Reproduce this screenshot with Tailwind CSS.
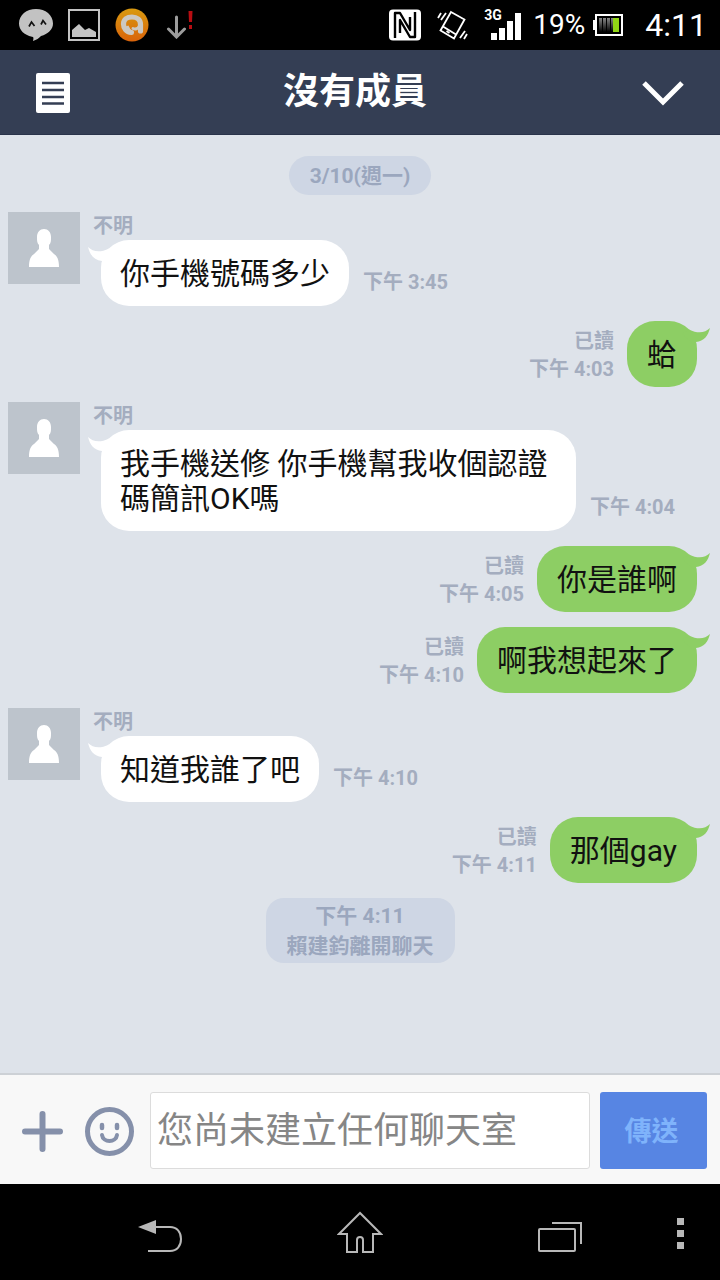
<!DOCTYPE html>
<html lang="zh-Hant">
<head>
<meta charset="utf-8">
<meta name="viewport" content="width=device-width, initial-scale=1">
<title>沒有成員</title>
<script src="https://cdn.jsdelivr.net/npm/@tailwindcss/browser@4"></script>
</head>
<body class="flex min-h-screen flex-col bg-[#dee3ea] font-[Roboto,'Noto_Sans_CJK_TC',sans-serif]">

<!-- Status bar -->
<div class="flex h-[50px] items-center justify-between bg-black pr-[13px] pl-[19px] text-white">
  <div class="flex items-center gap-[15px]">
    <svg class="h-8 w-[34px]" viewBox="0 0 34 32"><path d="M17 0C7.500 0 0 6 0 14.500c0 6.500 5 11.500 13 13.200 1.500.3 1.800 1 1 4.300 3.500-1 6-3 8-5C29 25 34 20.500 34 14.500 34 6 26.500 0 17 0Z" fill="#c2c2c2"/><path d="M10 17.500 12.500 13l3 4M22 15.500l2-4 3 4" fill="none" stroke="#111" stroke-width="1.700"/></svg>
    <svg class="size-8" viewBox="0 0 32 32"><rect x="1" y="1" width="30" height="30" fill="none" stroke="#c4c4c4" stroke-width="2"/><path d="M4 28v-7l7-6 6 6 4-2 7 4v5Z" fill="#c4c4c4"/></svg>
    <svg class="size-[34px]" viewBox="0 0 34 34"><defs><linearGradient id="orb" x1="0" y1="0" x2="0" y2="1"><stop stop-color="#d99a10"/><stop offset="1" stop-color="#d9630a"/></linearGradient></defs><circle cx="17" cy="17" r="16.500" fill="url(#orb)"/><path d="M16.500 24.500C11 24 8.500 20 8.500 16 8.500 11.500 12 9 17 9s8.500 3 8.500 7.500V23" fill="none" stroke="#ccc8c2" stroke-width="5.200" stroke-linecap="round"/><path d="M12 18c1 3 2.500 5 5.500 7" fill="none" stroke="#ccc8c2" stroke-width="3"/><path d="M18 20.500c2 1 5 .5 6-2" fill="none" stroke="#ccc8c2" stroke-width="3" stroke-linecap="round"/></svg>
    <svg class="h-7 w-[29px]" viewBox="0 0 29 28"><path d="M12.500 6v19M4.500 18l8 8 8-8" fill="none" stroke="#9c9c9c" stroke-width="3" stroke-linecap="round"/><path d="M24.500 0h4l-.5 11h-3zM25 14h3v4h-3z" fill="#b80d12"/></svg>
  </div>
  <div class="flex items-center">
    <svg class="h-8 w-8" viewBox="0 0 32 32"><rect width="32" height="31" y=".5" rx="4" fill="#fff"/><path d="M6 29V4h5l10 17V8M26 3v25h-5L11 11v13" fill="none" stroke="#000" stroke-width="2.400" stroke-linejoin="round"/></svg>
    <svg class="ml-4 h-8 w-[31px]" viewBox="0 0 31 32" fill="none" stroke="#fff" stroke-width="1.800"><path d="M14 3 27.500 10.500 17 29.500 3.500 21.500ZM6 17.500 19 25.500M9.500 22l3 2M1 9l3-5M4 11l5-7M23 29l5-7M27 30l3-5"/></svg>
    <div class="ml-4 flex h-8 w-[38px] items-start">
      <span class="w-[19px] text-sm leading-3 font-bold">3G</span>
      <svg class="-ml-3 h-8 w-[30px] shrink-0" viewBox="0 0 30 32" fill="#fff"><path d="M0 24h6v7H0zM8 19h6v12H8zM16 12h6v19h-6zM24 4h6v27h-6z"/></svg>
    </div>
    <span class="ml-[11px] text-[28px] leading-8">19%</span>
    <svg class="ml-2 h-6 w-[31px]" viewBox="0 0 31 24"><defs><linearGradient id="cell" x1="0" y1="0" x2="0" y2="1"><stop stop-color="#888"/><stop offset="1" stop-color="#000"/></linearGradient></defs><rect x="3" y="2" width="26" height="20" fill="none" stroke="#fff" stroke-width="2"/><path d="M0 7h2v10H0z" fill="#fff"/><path d="M6 5h3v14H6zM10 5h3v14h-3zM14 5h3v14h-3zM18 5h2v14h-2z" fill="url(#cell)"/><path d="M20 5h6v14h-6z" fill="#91d515"/></svg>
    <span class="ml-[21px] text-[32px] leading-8">4:11</span>
  </div>
</div>

<!-- Chat header -->
<header class="flex h-[85px] items-center justify-between border-b border-[#29334a] bg-[#343e54] px-9 pt-0.5 text-white">
  <button type="button" aria-label="記事本" class="w-12"><svg class="h-10 w-[34px]" viewBox="0 0 34 40"><rect width="34" height="40" rx="2" fill="#fff"/><path d="M6 10h22M6 17h22M6 24h22M6 30.500h22" stroke="#343e54" stroke-width="2.400"/></svg></button>
  <h1 class="pb-0.5 text-4xl font-bold">沒有成員</h1>
  <button type="button" aria-label="選單" class="flex w-[58px] justify-end"><svg class="h-7 w-[42px]" viewBox="0 0 42 28"><path d="M2 4 21 23 40 4" fill="none" stroke="#fff" stroke-width="5"/></svg></button>
</header>

<!-- Conversation -->
<main class="flex flex-1 flex-col gap-[15px] pt-[21px] pb-4 text-[30px] leading-[35px] text-[#111]">
  <p class="mb-0.5 self-center rounded-full bg-[#ced6e4] px-[21px] pt-[5px] pb-[3px] text-[21px] leading-[31px] font-bold text-[#9ba7be]">3/10(週一)</p>

  <article class="flex items-end pl-2">
    <svg class="size-[72px] self-start bg-[#bdc4cc]" viewBox="0 0 72 72"><path d="M21 55c0-8 2-11 5-13l5-5v-4c-2-2-2-4-2-8 0-5 3-8 7-8s7 3 7 8c0 4 0 6-2 8v4l5 5c3 2 5 5 5 13Z" fill="#fff"/></svg>
    <div class="ml-[13px]">
      <h2 class="text-xl leading-7 font-bold text-[#a4adbf]">不明</h2>
      <div class="relative ml-2 max-w-[475px] rounded-[28px] bg-white px-[19px] pt-4 pb-[15px]">
        <svg class="absolute top-[5px] -left-[13px] h-5 w-7" viewBox="0 0 28 20"><path d="M0 2C5 7 12 8 21 3.500L28 8 14 20V16C6 15 2 10 0 2Z" fill="#fff"/></svg>
        <p class="relative">你手機號碼多少</p>
      </div>
    </div>
    <time class="mb-[10px] ml-[14px] text-xl leading-7 font-bold whitespace-nowrap text-[#a4adbf]">下午 3:45</time>
  </article>

  <article class="flex items-center justify-end gap-[13px] pr-[23px]">
    <div class="pt-0.5 text-right text-xl leading-7 font-bold text-[#a4adbf]"><p>已讀</p><time>下午 4:03</time></div>
    <div class="relative rounded-[28px] bg-[#8dce64] px-5 pt-4 pb-[15px]">
      <svg class="absolute top-[5px] -right-[13px] h-5 w-7" viewBox="0 0 28 20"><path d="M28 2C23 7 16 8 7 3.500L0 8 14 20V16C22 15 26 10 28 2Z" fill="#8dce64"/></svg>
      <p class="relative">蛤</p>
    </div>
  </article>

  <article class="flex items-end pl-2">
    <svg class="size-[72px] self-start bg-[#bdc4cc]" viewBox="0 0 72 72"><path d="M21 55c0-8 2-11 5-13l5-5v-4c-2-2-2-4-2-8 0-5 3-8 7-8s7 3 7 8c0 4 0 6-2 8v4l5 5c3 2 5 5 5 13Z" fill="#fff"/></svg>
    <div class="ml-[13px]">
      <h2 class="text-xl leading-7 font-bold text-[#a4adbf]">不明</h2>
      <div class="relative ml-2 max-w-[475px] rounded-[28px] bg-white px-[19px] pt-4 pb-[15px]">
        <svg class="absolute top-[5px] -left-[13px] h-5 w-7" viewBox="0 0 28 20"><path d="M0 2C5 7 12 8 21 3.500L28 8 14 20V16C6 15 2 10 0 2Z" fill="#fff"/></svg>
        <p class="relative">我手機送修 你手機幫我收個認證碼簡訊OK嗎</p>
      </div>
    </div>
    <time class="mb-[10px] ml-[14px] text-xl leading-7 font-bold whitespace-nowrap text-[#a4adbf]">下午 4:04</time>
  </article>

  <article class="flex items-center justify-end gap-[13px] pr-[23px]">
    <div class="pt-0.5 text-right text-xl leading-7 font-bold text-[#a4adbf]"><p>已讀</p><time>下午 4:05</time></div>
    <div class="relative rounded-[28px] bg-[#8dce64] px-5 pt-4 pb-[15px]">
      <svg class="absolute top-[5px] -right-[13px] h-5 w-7" viewBox="0 0 28 20"><path d="M28 2C23 7 16 8 7 3.500L0 8 14 20V16C22 15 26 10 28 2Z" fill="#8dce64"/></svg>
      <p class="relative">你是誰啊</p>
    </div>
  </article>

  <article class="flex items-center justify-end gap-[13px] pr-[23px]">
    <div class="pt-0.5 text-right text-xl leading-7 font-bold text-[#a4adbf]"><p>已讀</p><time>下午 4:10</time></div>
    <div class="relative rounded-[28px] bg-[#8dce64] px-5 pt-4 pb-[15px]">
      <svg class="absolute top-[5px] -right-[13px] h-5 w-7" viewBox="0 0 28 20"><path d="M28 2C23 7 16 8 7 3.500L0 8 14 20V16C22 15 26 10 28 2Z" fill="#8dce64"/></svg>
      <p class="relative">啊我想起來了</p>
    </div>
  </article>

  <article class="flex items-end pl-2">
    <svg class="size-[72px] self-start bg-[#bdc4cc]" viewBox="0 0 72 72"><path d="M21 55c0-8 2-11 5-13l5-5v-4c-2-2-2-4-2-8 0-5 3-8 7-8s7 3 7 8c0 4 0 6-2 8v4l5 5c3 2 5 5 5 13Z" fill="#fff"/></svg>
    <div class="ml-[13px]">
      <h2 class="text-xl leading-7 font-bold text-[#a4adbf]">不明</h2>
      <div class="relative ml-2 max-w-[475px] rounded-[28px] bg-white px-[19px] pt-4 pb-[15px]">
        <svg class="absolute top-[5px] -left-[13px] h-5 w-7" viewBox="0 0 28 20"><path d="M0 2C5 7 12 8 21 3.500L28 8 14 20V16C6 15 2 10 0 2Z" fill="#fff"/></svg>
        <p class="relative">知道我誰了吧</p>
      </div>
    </div>
    <time class="mb-[10px] ml-[14px] text-xl leading-7 font-bold whitespace-nowrap text-[#a4adbf]">下午 4:10</time>
  </article>

  <article class="flex items-center justify-end gap-[13px] pr-[23px]">
    <div class="pt-0.5 text-right text-xl leading-7 font-bold text-[#a4adbf]"><p>已讀</p><time>下午 4:11</time></div>
    <div class="relative rounded-[28px] bg-[#8dce64] px-5 pt-4 pb-[15px]">
      <svg class="absolute top-[5px] -right-[13px] h-5 w-7" viewBox="0 0 28 20"><path d="M28 2C23 7 16 8 7 3.500L0 8 14 20V16C22 15 26 10 28 2Z" fill="#8dce64"/></svg>
      <p class="relative">那個gay</p>
    </div>
  </article>

  <p class="self-center rounded-[18px] bg-[#ced6e4] px-[21px] pt-[3px] pb-0.5 text-center text-[21px] leading-[30px] font-bold text-[#9ba7be]">下午 4:11<br>賴建鈞離開聊天</p>
</main>

<!-- Composer -->
<form class="flex h-[111px] items-center border-t-2 border-[#cdd1d6] bg-[#f8f8f8] pt-0.5 pr-[13px] pl-[22px]">
  <button type="button" aria-label="附加" class="pt-0.5"><svg class="size-[41px]" viewBox="0 0 41 41"><path d="M20.500 3v35M3 20.500h35" stroke="#8590aa" stroke-width="6" stroke-linecap="round"/></svg></button>
  <button type="button" aria-label="貼圖" class="ml-[22px] pt-0.5"><svg class="size-[49px]" viewBox="0 0 49 49" fill="none" stroke="#8590aa" stroke-linecap="round"><circle cx="24.500" cy="24.500" r="22" stroke-width="5"/><path d="M17 18v3M32 18v3" stroke-width="4.500"/><path d="M17 28c1 8 14 8 15 0" stroke-width="4"/></svg></button>
  <input type="text" aria-label="訊息" placeholder="您尚未建立任何聊天室" class="ml-4 h-[77px] min-w-0 flex-1 rounded-[3px] border border-[#dcdcdc] bg-white px-1.5 text-4xl placeholder:text-[#868686]">
  <button type="submit" class="ml-2.5 h-[77px] w-[107px] rounded-[3px] bg-[#5785e3] pt-1 pr-1 text-[27px] font-bold text-[#7fb3fb]">傳送</button>
</form>

<!-- System navigation -->
<nav class="flex h-24 items-center bg-black pt-1 pl-[60px]">
  <div class="grid flex-1 grid-cols-3 justify-items-center">
    <button type="button" aria-label="返回"><svg class="h-11 w-[44px]" viewBox="0 0 44 44"><path d="M0 15 18 8v14Z" fill="#b8b8b8"/><path d="M16 15h16c7 0 11 5 11 12s-4 12-11 12H10" fill="none" stroke="#b8b8b8" stroke-width="2"/></svg></button>
    <button type="button" aria-label="首頁"><svg class="h-[46px] w-[46px]" viewBox="0 0 46 46" fill="none" stroke="#b8b8b8" stroke-width="2"><path d="M23 2 2 23h8v18h10V29c0-4 6-4 6 0v12h10V23h8Z"/></svg></button>
    <button type="button" aria-label="最近使用"><svg class="h-11 w-[44px]" viewBox="0 0 44 44" fill="none" stroke="#b8b8b8" stroke-width="2"><rect x="1" y="17" width="36" height="22" rx="1"/><path d="M14 11h29v21"/></svg></button>
  </div>
  <button type="button" aria-label="更多" class="flex w-[60px] justify-center pr-[18px]"><svg class="h-8 w-2" viewBox="0 0 8 32" fill="#b8b8b8"><path d="M0 0h7v7H0zM0 12h7v7H0zM0 24h7v7H0z"/></svg></button>
</nav>
</body>
</html>
